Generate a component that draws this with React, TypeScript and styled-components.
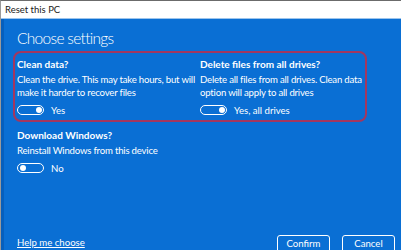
import styled, { createGlobalStyle } from 'styled-components';

const Global = createGlobalStyle`
  html, body { margin: 0; padding: 0; }
  body {
    width: 401px;
    height: 250px;
    overflow: hidden;
    font-family: Lato, "Noto Sans", sans-serif;
  }
`;

const Window = styled.div`
  width: 401px;
  height: 250px;
  display: flex;
  flex-direction: column;
  border-top: 1px solid #6b6b6b;
  border-left: 1px solid #9a9a9a;
  box-sizing: border-box;
  overflow: hidden;
`;

const TitleBar = styled.div`
  height: 17px;
  background: #ffffff;
  border-bottom: 1px solid #9cc4ec;
  display: flex;
  align-items: center;
  padding-left: 4px;
  font-size: 9.5px;
  color: #1a1a1a;
`;

const Body = styled.div`
  flex: 1;
  background: #0a6fd4;
  border-left: 3px solid #065fbd;
  padding: 8px 0 0 9px;
  display: flex;
  flex-direction: column;
  color: #ffffff;
`;

const Heading = styled.h1`
  margin: 0 0 0 4px;
  font-size: 15.5px;
  font-weight: 300;
  line-height: 22px;
  letter-spacing: -0.7px;
`;

const Highlight = styled.div`
  margin-top: 2px;
  width: 354px;
  box-sizing: border-box;
  border: 2px solid #a3375f;
  border-radius: 8px;
  padding: 4px 2px 4px;
  display: grid;
  grid-template-columns: 183px 1fr;
`;

const Option = styled.div<{ $indent?: boolean }>`
  display: flex;
  flex-direction: column;
  margin-left: ${p => (p.$indent ? '4px' : '0')};
  margin-top: ${p => (p.$indent ? '6px' : '0')};
`;

const OptionTitle = styled.div`
  font-size: 10px;
  font-weight: 700;
  line-height: 14px;
`;

const OptionText = styled.div`
  font-size: 9.6px;
  line-height: 13px;
  margin-top: 2px;
  white-space: nowrap;
  letter-spacing: -0.2px;
`;

const ToggleRow = styled.div`
  display: flex;
  align-items: center;
  gap: 7px;
  margin-top: 5px;
  font-size: 9.6px;
  height: 12px;
`;

const Track = styled.span<{ $on: boolean }>`
  width: 22px;
  height: 8px;
  border: 1.5px solid #ffffff;
  border-radius: 6px;
  display: flex;
  align-items: center;
  justify-content: ${p => (p.$on ? 'flex-end' : 'flex-start')};
  padding: 0 1.5px;
  box-sizing: content-box;
`;

const Knob = styled.span`
  width: 6px;
  height: 6px;
  border-radius: 50%;
  background: #ffffff;
`;

const Footer = styled.div`
  margin-top: auto;
  display: flex;
  align-items: flex-end;
  justify-content: space-between;
  padding: 0 6px 0 4px;
  height: 16px;
`;

const HelpLink = styled.a`
  font-size: 9.6px;
  color: #ffffff;
  text-decoration: underline;
  line-height: 12px;
  margin-bottom: 1px;
`;

const Buttons = styled.div`
  display: flex;
  gap: 12px;
  align-self: flex-end;
  margin-bottom: -6px;
`;

const Button = styled.button`
  width: 53px;
  height: 21px;
  box-sizing: border-box;
  background: transparent;
  border: 1px solid #ffffff;
  border-radius: 3px;
  color: #ffffff;
  font-family: inherit;
  font-size: 9.6px;
  padding: 0 0 4px;
`;

function Toggle({ on, label }: { on: boolean; label: string }) {
  return (
    <ToggleRow>
      <Track $on={on}>
        <Knob />
      </Track>
      {label}
    </ToggleRow>
  );
}

export default function App() {
  return (
    <>
      <Global />
      <Window>
        <TitleBar>Reset this PC</TitleBar>
        <Body>
          <Heading>Choose settings</Heading>
          <Highlight>
            <Option>
              <OptionTitle>Clean data?</OptionTitle>
              <OptionText>
                Clean the drive. This may take hours, but will
                <br />
                make it harder to recover files
              </OptionText>
              <Toggle on label="Yes" />
            </Option>
            <Option>
              <OptionTitle>Delete files from all drives?</OptionTitle>
              <OptionText>
                Delete all files from all drives. Clean data
                <br />
                option will apply to all drives
              </OptionText>
              <Toggle on label="Yes, all drives" />
            </Option>
          </Highlight>
          <Option $indent>
            <OptionTitle>Download Windows?</OptionTitle>
            <OptionText>Reinstall Windows from this device</OptionText>
            <Toggle on={false} label="No" />
          </Option>
          <Footer>
            <HelpLink href="#">Help me choose</HelpLink>
            <Buttons>
              <Button>Confirm</Button>
              <Button>Cancel</Button>
            </Buttons>
          </Footer>
        </Body>
      </Window>
    </>
  );
}
